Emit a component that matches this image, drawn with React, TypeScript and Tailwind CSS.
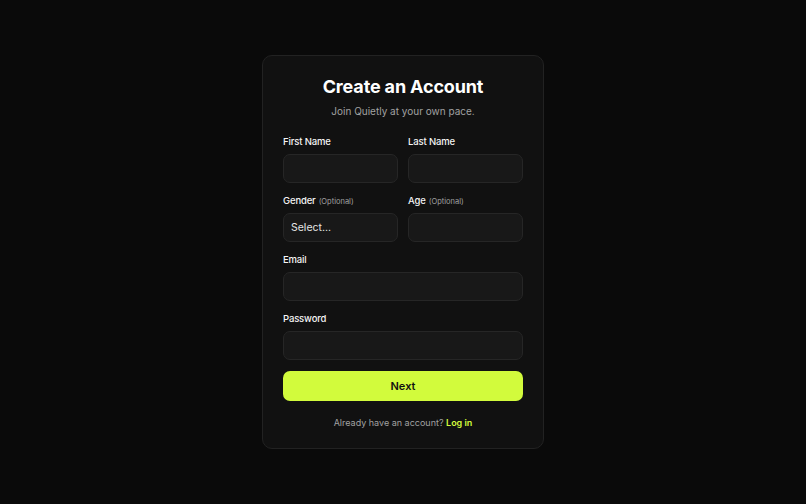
import React from 'react';

const Field: React.FC<{ label: string; optional?: boolean; children?: React.ReactNode }> = ({ label, optional, children }) => (
  <div className="flex flex-col">
    <label className="text-[9.5px] font-medium tracking-[-0.15px] text-neutral-100 leading-[14px] h-[14px] block">
      {label}
      {optional && <span className="ml-[3px] text-[7.5px] tracking-normal font-normal text-neutral-400">(Optional)</span>}
    </label>
    <div className="mt-[5px] h-[29px] rounded-[7px] bg-[#181818] border border-[#262626] flex items-center px-[7px] text-[10.5px] text-neutral-200">
      {children}
    </div>
  </div>
);

export default function App() {
  return (
    <div className="min-h-[504px] w-full bg-[#0a0a0a] flex justify-center pt-[55px]" style={{ fontFamily: 'Inter, "Noto Sans", sans-serif' }}>
      <div className="w-[282px] h-[394px] rounded-[10px] bg-[#111111] border border-[#222222] px-[20px] pt-[17px]">
        <h1 className="text-center text-[18px] leading-[28px] font-bold tracking-[-0.15px] text-white">Create an Account</h1>
        <p className="text-center text-[10px] leading-[20px] text-neutral-400">Join Quietly at your own pace.</p>

        <div className="mt-[14px] grid grid-cols-2 gap-x-[10px] gap-y-[11px]">
          <Field label="First Name" />
          <Field label="Last Name" />
          <Field label="Gender" optional>Select...</Field>
          <Field label="Age" optional />
          <div className="col-span-2"><Field label="Email" /></div>
          <div className="col-span-2"><Field label="Password" /></div>
        </div>

        <button className="mt-[11px] w-full h-[30px] rounded-[7px] bg-[#d2fb3c] text-[11px] font-semibold text-[#111]">Next</button>

        <p className="mt-[14px] text-center text-[9px] leading-[16px] text-neutral-400">
          Already have an account? <span className="font-semibold text-[#d2fb3c]">Log in</span>
        </p>
      </div>
    </div>
  );
}
